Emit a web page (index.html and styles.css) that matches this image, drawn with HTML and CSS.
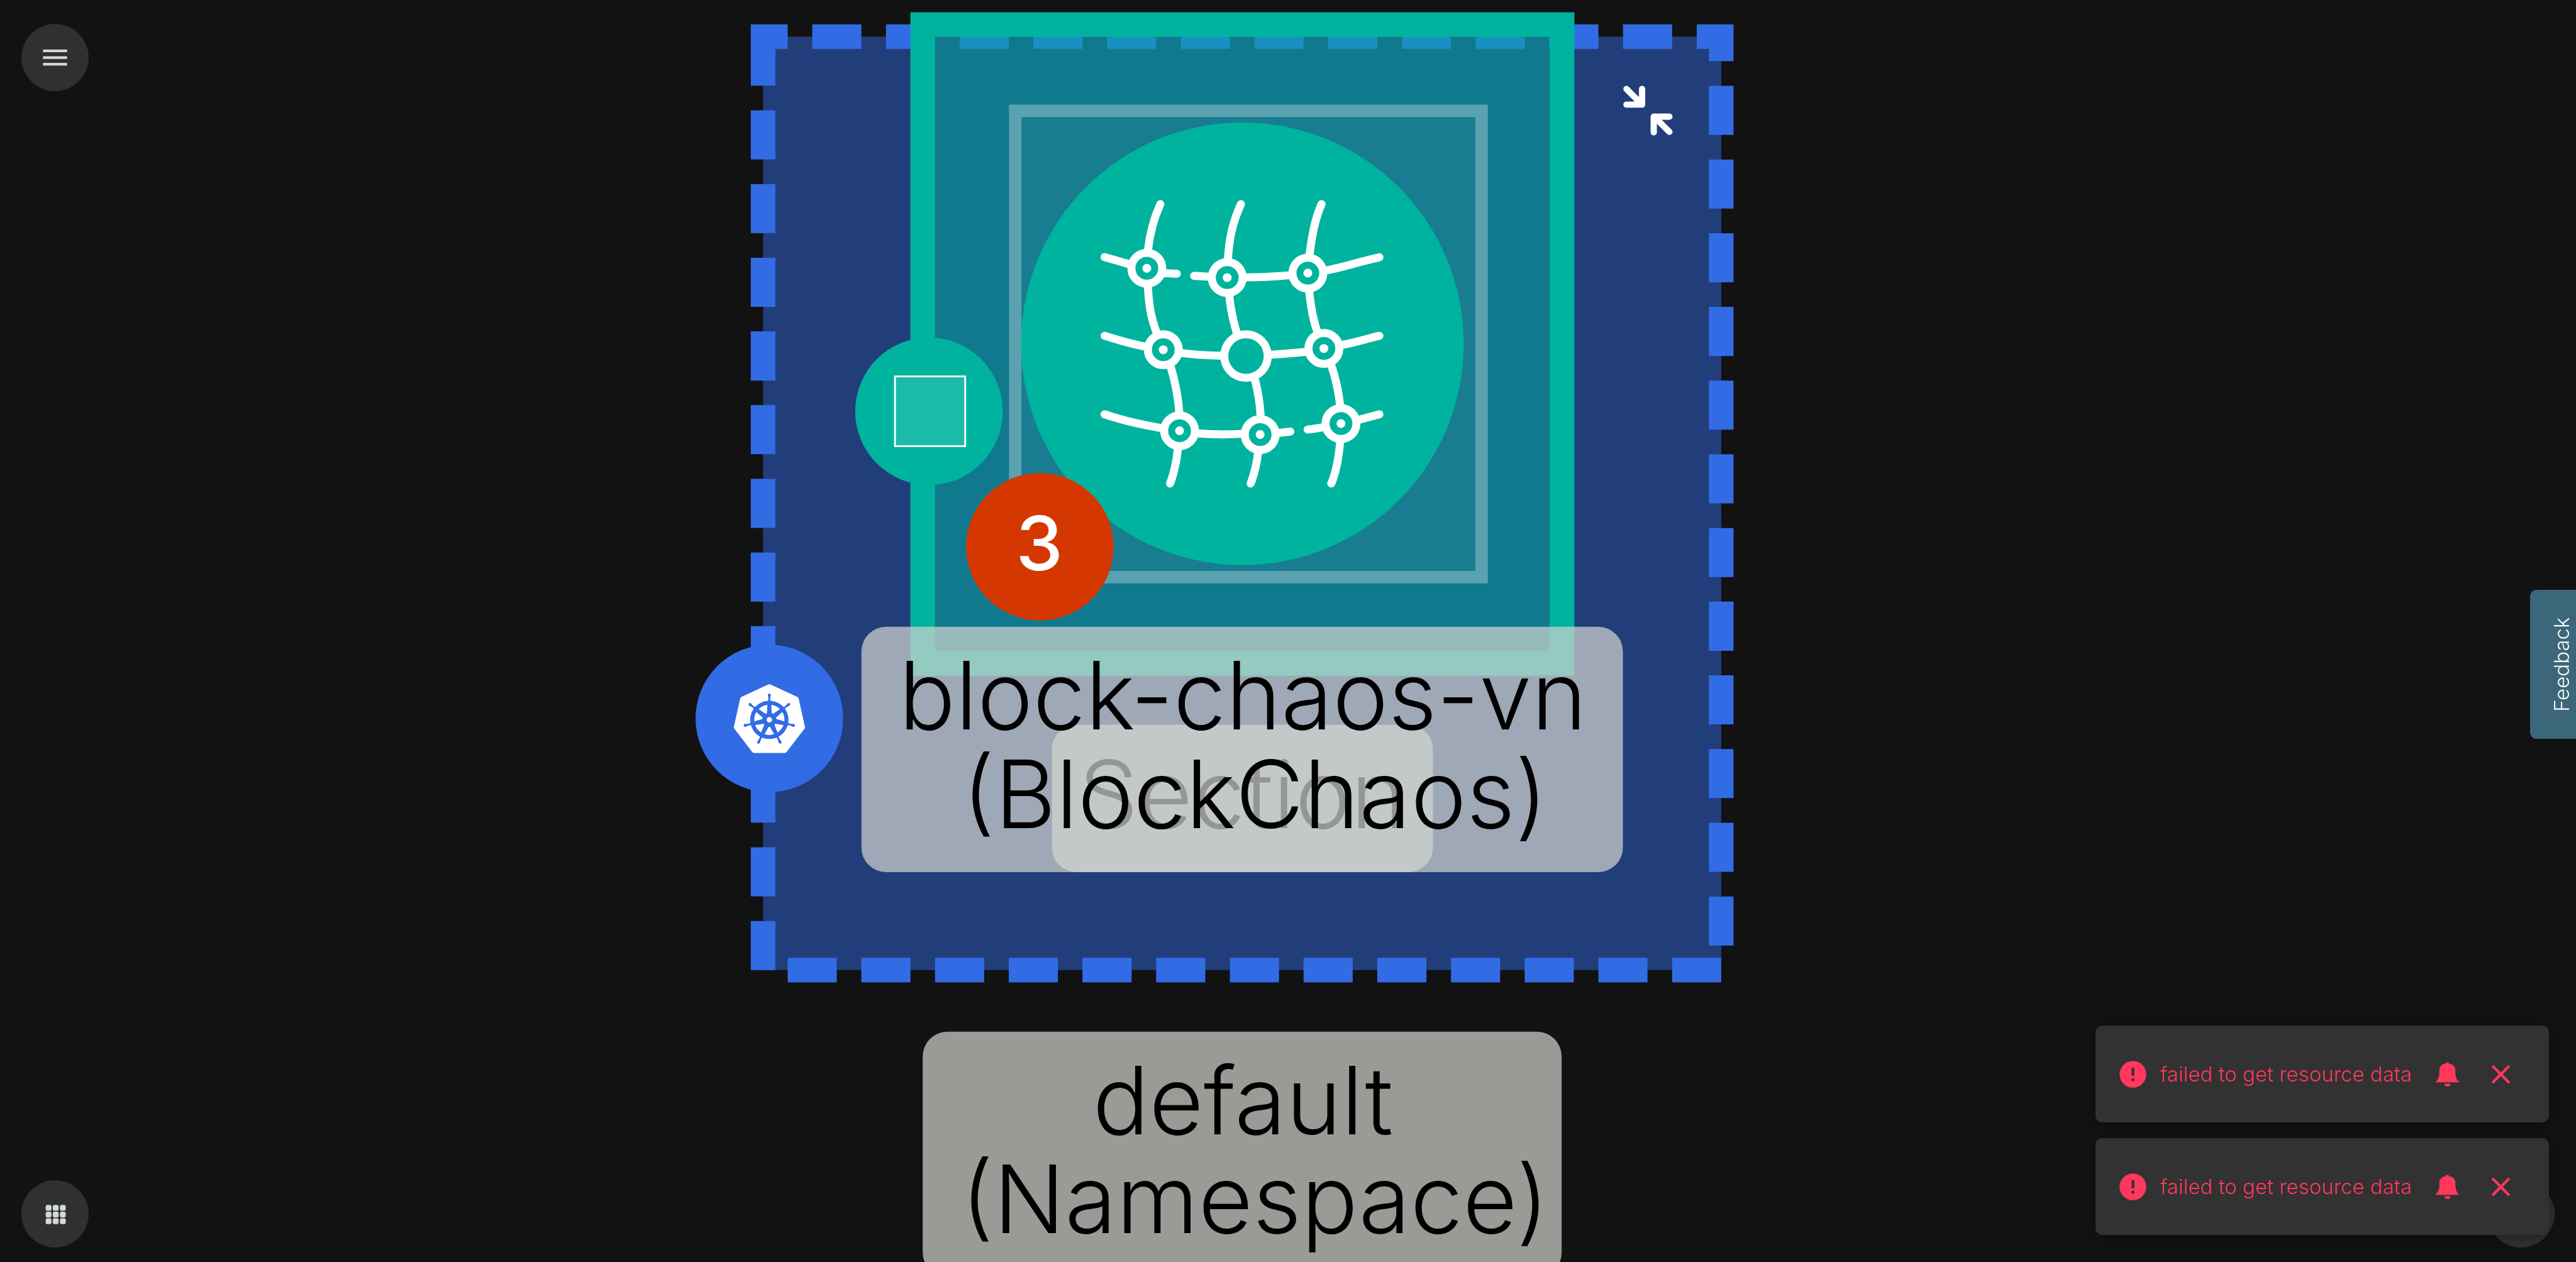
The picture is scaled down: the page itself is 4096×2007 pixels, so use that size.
FILE: index.html
```html
<!DOCTYPE html>
<html lang="en">
<head>
<meta charset="utf-8">
<meta name="viewport" content="width=device-width, initial-scale=1">
<title>Design canvas</title>
<link rel="stylesheet" href="styles.css">
</head>
<body>
<main class="canvas">
<svg class="graph" viewBox="0 0 5760 2823" role="img" aria-label="Design graph">
  <defs>
    <g id="node"><circle class="ring" r="73"/><circle class="dot" r="21"/></g>
    <g id="spoke">
      <path d="M-12 -110H12L17 -36H-17Z"/>
      <path d="M-10 -122C-5 -132 -5 -144 -9 -162A10 10 0 1 1 9 -162C5 -144 5 -132 10 -122Z"/>
    </g>
  </defs>

  <!-- namespace group -->
  <rect class="ns-fill" x="1706" y="82" width="2143" height="2088"/>
  <path class="ns-border" pathLength="154000" d="M1706 82V2170H3849V82Z"/>
  <g class="collapse">
    <path d="M3637 199L3670 232M3637 234H3672V199"/>
    <path d="M3733 295L3700 262M3733 261H3698V296"/>
  </g>

  <!-- chaos group -->
  <rect class="chaos" x="2063" y="55" width="1430" height="1429"/>
  <rect class="section" x="2270" y="248" width="1043" height="1043"/>
  <circle class="green" cx="2778" cy="769" r="495"/>
  <g class="mesh" transform="translate(2400 400) scale(.472)">
    <path d="M412 120C380 190 362 260 353 340M353 510C358 600 368 660 393 725M461 890C485 970 497 1040 502 1110M495 1280C488 1350 475 1400 458 1444"/>
    <path d="M794 120C755 205 738 280 732 385M739 555C745 620 755 665 774 730M860 950C875 1010 885 1065 887 1125M875 1300C868 1355 857 1400 840 1444"/>
    <path d="M1176 120C1145 190 1132 260 1118 365M1118 535C1124 600 1133 660 1156 725M1221 880C1243 945 1257 1010 1264 1075M1264 1245C1257 1330 1245 1390 1222 1444"/>
    <path d="M148 371L270 406M430 447L490 450M572 460L645 464M815 467C890 467 950 464 1025 457M1195 435C1285 418 1360 391 1450 372"/>
    <path d="M148 744C215 765 270 781 345 796M505 825C570 832 640 838 700 838M935 834L1105 820M1270 788C1340 776 1390 757 1450 744"/>
    <path d="M148 1116C240 1148 320 1165 420 1182M585 1206C660 1212 730 1213 805 1208M965 1205L1028 1198M1110 1188C1140 1186 1160 1182 1190 1176M1350 1143L1450 1116"/>
    <use href="#node" x="348" y="424"/><use href="#node" x="729" y="468"/><use href="#node" x="1111" y="447"/>
    <use href="#node" x="426" y="810"/><use href="#node" x="1187" y="804"/>
    <use href="#node" x="503" y="1194"/><use href="#node" x="885" y="1212"/><use href="#node" x="1268" y="1160"/>
    <circle class="ring" cx="818" cy="840" r="103"/>
  </g>

  <!-- badges -->
  <circle class="green" cx="2077" cy="920" r="165"/>
  <rect class="glyph" x="2001" y="842" width="157" height="156"/>
  <circle class="count-bg" cx="2325" cy="1223" r="165"/>
  <text class="count" x="2324" y="1276">3</text>
  <circle class="k8s-bg" cx="1720" cy="1607" r="165"/>
  <g transform="translate(1600 1490) scale(.3333)">
    <path class="hepta" d="M360 139L540 222L582 410L462 566H258L139 410L181 222Z"/>
    <g class="wheel" transform="translate(360 361)">
      <circle class="rim" r="115"/><circle r="47"/>
      <use href="#spoke"/><use href="#spoke" transform="rotate(51.43)"/><use href="#spoke" transform="rotate(102.86)"/><use href="#spoke" transform="rotate(154.29)"/><use href="#spoke" transform="rotate(205.71)"/><use href="#spoke" transform="rotate(257.14)"/><use href="#spoke" transform="rotate(308.57)"/>
      <circle class="hub" r="18"/>
    </g>
  </g>

  <!-- labels -->
  <rect class="label-bg" x="2352" y="1621" width="852" height="330" rx="55"/>
  <text class="label" x="2778" y="1852">Section</text>
  <rect class="label-bg" x="1926" y="1402" width="1703" height="549" rx="55"/>
  <text class="label" x="2779" y="1632">block-chaos-vn</text>
  <text class="label" x="2806" y="1852">(BlockChaos)</text>
  <rect class="label-bg" x="2063" y="2308" width="1429" height="549" rx="55"/>
  <text class="label" x="2779" y="2538">default</text>
  <text class="label" x="2806" y="2758">(Namespace)</text>
</svg>
</main>

<button class="fab fab-menu" type="button" aria-label="Menu">
  <svg class="fab-icon" viewBox="0 0 24 24"><path d="M3 6h18v2H3zM3 11h18v2H3zM3 16h18v2H3z"/></svg>
</button>
<button class="fab fab-apps" type="button" aria-label="Apps">
  <svg class="fab-icon" viewBox="0 0 72 72">
    <rect x="15" y="16" width="13" height="13" rx="4"/><rect x="31" y="16" width="13" height="13" rx="4"/><rect x="47" y="16" width="13" height="13" rx="4"/>
    <rect x="15" y="31" width="13" height="13" rx="4"/><rect x="31" y="31" width="13" height="13" rx="4"/><rect x="47" y="31" width="13" height="13" rx="4"/>
    <rect x="15" y="46" width="13" height="13" rx="4"/><rect x="31" y="46" width="13" height="13" rx="4"/><rect x="47" y="46" width="13" height="13" rx="4"/>
  </svg>
</button>
<button class="fab fab-help" type="button" aria-label="Help"></button>
<button class="feedback" type="button">Feedback</button>

<div class="toasts">
  <div class="toast" role="alert">
    <svg class="icon" viewBox="0 0 24 24"><path d="M12 2a10 10 0 1 0 0 20a10 10 0 0 0 0-20zm1 15h-2v-2h2zm0-4h-2V7h2z"/></svg>
    <span class="message">failed to get resource data</span>
    <button class="action" type="button" aria-label="Notifications"><svg class="icon" viewBox="0 0 72 72"><path d="M9 54C15 48 18 42 18 33V27C18 18 24 13 32 12C32 10 34 9 36 9S40 10 40 12C48 13 54 18 54 27V33C54 42 57 48 63 54ZM29 57H43C43 61 40 63 36 63S29 61 29 57Z"/></svg></button>
    <button class="action" type="button" aria-label="Close"><svg class="icon" viewBox="0 0 24 24"><path d="M19 6.41 17.59 5 12 10.59 6.41 5 5 6.41 10.59 12 5 17.59 6.41 19 12 13.41 17.59 19 19 17.59 13.41 12z"/></svg></button>
  </div>
  <div class="toast" role="alert">
    <svg class="icon" viewBox="0 0 24 24"><path d="M12 2a10 10 0 1 0 0 20a10 10 0 0 0 0-20zm1 15h-2v-2h2zm0-4h-2V7h2z"/></svg>
    <span class="message">failed to get resource data</span>
    <button class="action" type="button" aria-label="Notifications"><svg class="icon" viewBox="0 0 72 72"><path d="M9 54C15 48 18 42 18 33V27C18 18 24 13 32 12C32 10 34 9 36 9S40 10 40 12C48 13 54 18 54 27V33C54 42 57 48 63 54ZM29 57H43C43 61 40 63 36 63S29 61 29 57Z"/></svg></button>
    <button class="action" type="button" aria-label="Close"><svg class="icon" viewBox="0 0 24 24"><path d="M19 6.41 17.59 5 12 10.59 6.41 5 5 6.41 10.59 12 5 17.59 6.41 19 12 13.41 17.59 19 19 17.59 13.41 12z"/></svg></button>
  </div>
</div>
</body>
</html>
```
FILE: styles.css
```css
* { box-sizing: border-box; }
body {
  margin: 0;
  height: 100vh;
  overflow: hidden;
  background: #121212;
  font-family: Inter, Lato, sans-serif;
  font-weight: 300;
}
button {
  margin: 0;
  padding: 0;
  border: 0;
  background: none;
  color: inherit;
  font: inherit;
}
.canvas { height: 100%; }
.graph { display: block; width: 100%; height: 100%; }

.ns-fill { fill: #223e7a; }
.ns-border { fill: none; stroke: #326ce5; stroke-width: 55; stroke-dasharray: 1998 1002; }
.collapse { fill: none; stroke: #fff; stroke-width: 14; stroke-linecap: round; stroke-linejoin: round; }
.chaos { fill: #00b39f; fill-opacity: .5; stroke: #00b39f; stroke-width: 55; }
.section { fill: #187d91; stroke: #5aa2af; stroke-width: 28; }
.green { fill: #00b39f; }
.mesh { fill: none; stroke: #fff; stroke-width: 38; stroke-linecap: round; }
.ring { fill: #00b39f; stroke: #fff; stroke-width: 38; }
.dot { fill: #fff; stroke: none; }
.glyph { fill: #1bbaa9; stroke: #fff; stroke-width: 4; }
.count-bg { fill: #d43800; }
.count { fill: #fff; font-size: 168px; font-weight: 500; text-anchor: middle; }
.k8s-bg { fill: #326ce5; }
.hepta { fill: #fff; stroke: #fff; stroke-width: 34; stroke-linejoin: round; }
.wheel { fill: #326ce5; }
.rim { fill: none; stroke: #326ce5; stroke-width: 27; }
.hub { fill: #fff; }
.label-bg { fill: #d3d6d0; fill-opacity: .7; }
.label { fill: #000; font-size: 210px; text-anchor: middle; }

.fab {
  position: fixed;
  left: 34px;
  display: flex;
  align-items: center;
  justify-content: center;
  width: 107px;
  height: 107px;
  border-radius: 50%;
  background: #303030;
}
.fab-menu { top: 38px; }
.fab-apps { bottom: 23px; }
.fab-help { left: auto; right: 34px; bottom: 23px; }
.fab-icon { width: 51px; height: 51px; fill: #d3d8da; }

.feedback {
  position: fixed;
  right: 0;
  top: 938px;
  width: 73px;
  height: 237px;
  padding-right: 28px;
  border-radius: 0 10px 10px 0;
  background: #3c677a;
  color: #f5f8f8;
  font-size: 33px;
  line-height: 36px;
  writing-mode: vertical-rl;
  transform: rotate(180deg);
}

.toasts {
  position: fixed;
  right: 43px;
  bottom: 43px;
  display: flex;
  flex-direction: column;
  gap: 25px;
}
.toast {
  display: flex;
  align-items: center;
  width: 721px;
  height: 154px;
  padding: 0 51px 0 34px;
  border-radius: 11px;
  background: #323232;
  color: #ff385c;
  font-size: 33px;
  line-height: 48px;
  box-shadow: 0 4px 20px rgb(0 0 0 / 30%);
}
.icon { display: block; flex: none; width: 51px; height: 51px; fill: currentColor; }
.message { flex: 1; padding-left: 18px; white-space: nowrap; }
.action + .action { margin-left: 34px; }
```
